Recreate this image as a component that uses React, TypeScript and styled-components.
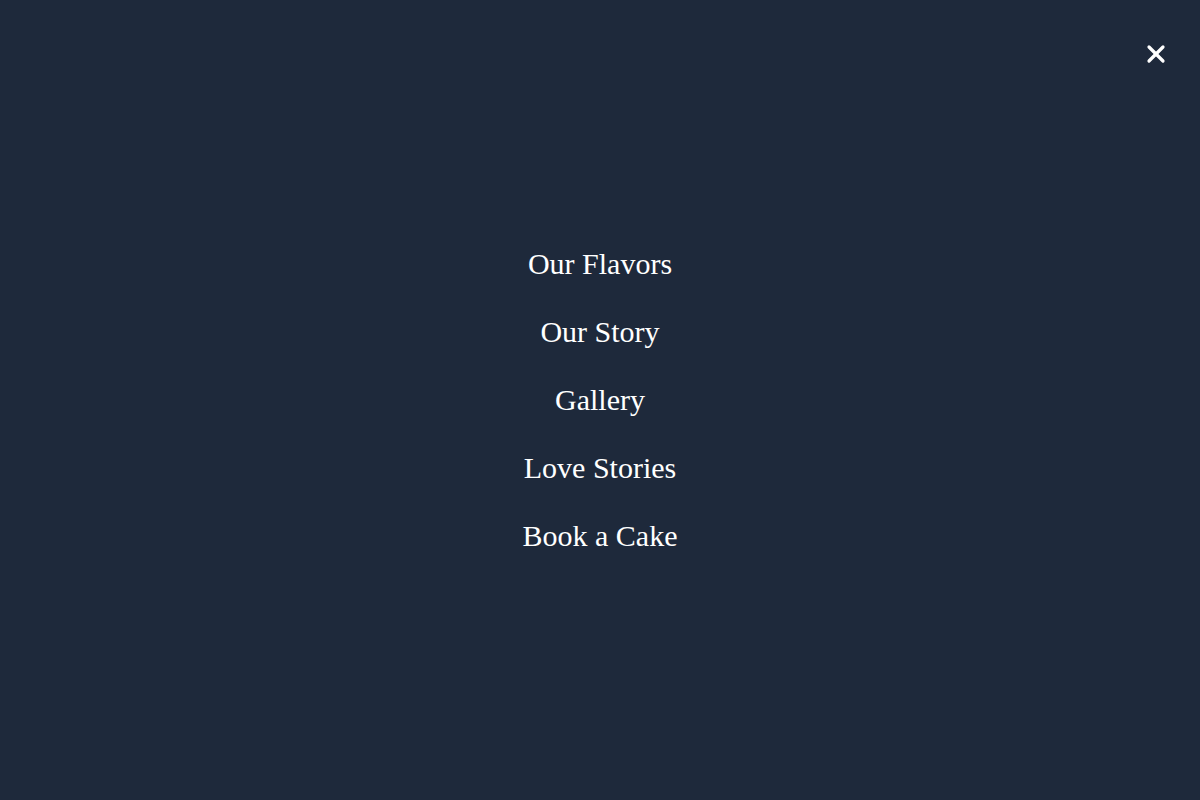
import React from 'react';
import styled, { createGlobalStyle } from 'styled-components';
import { X } from 'lucide-react';

const links = ['Our Flavors', 'Our Story', 'Gallery', 'Love Stories', 'Book a Cake'];

const App: React.FC = () => {
  return (
    <>
      <GlobalStyle />
      <Overlay>
        <CloseButton aria-label="Close menu">
          <X size={28} strokeWidth={2.75} />
        </CloseButton>
        <Nav>
          {links.map((label) => (
            <NavLink key={label} href="#">
              {label}
            </NavLink>
          ))}
        </Nav>
      </Overlay>
    </>
  );
};

const GlobalStyle = createGlobalStyle`
  html, body {
    margin: 0;
    padding: 0;
    background: #1e293b;
  }
`;

const Overlay = styled.div`
  position: relative;
  width: 100%;
  height: 100vh;
  background: #1e293b;
  display: flex;
  align-items: center;
  justify-content: center;
`;

const CloseButton = styled.button`
  position: absolute;
  top: 40px;
  right: 30px;
  padding: 0;
  border: none;
  background: transparent;
  color: #ffffff;
  cursor: pointer;
  display: flex;
  line-height: 0;
`;

const Nav = styled.nav`
  display: flex;
  flex-direction: column;
  align-items: center;
  gap: 32px;
`;

const NavLink = styled.a`
  font-family: "Liberation Serif", "Times New Roman", serif;
  font-size: 30px;
  line-height: 36px;
  color: #ffffff;
  text-decoration: none;
`;

export default App;
